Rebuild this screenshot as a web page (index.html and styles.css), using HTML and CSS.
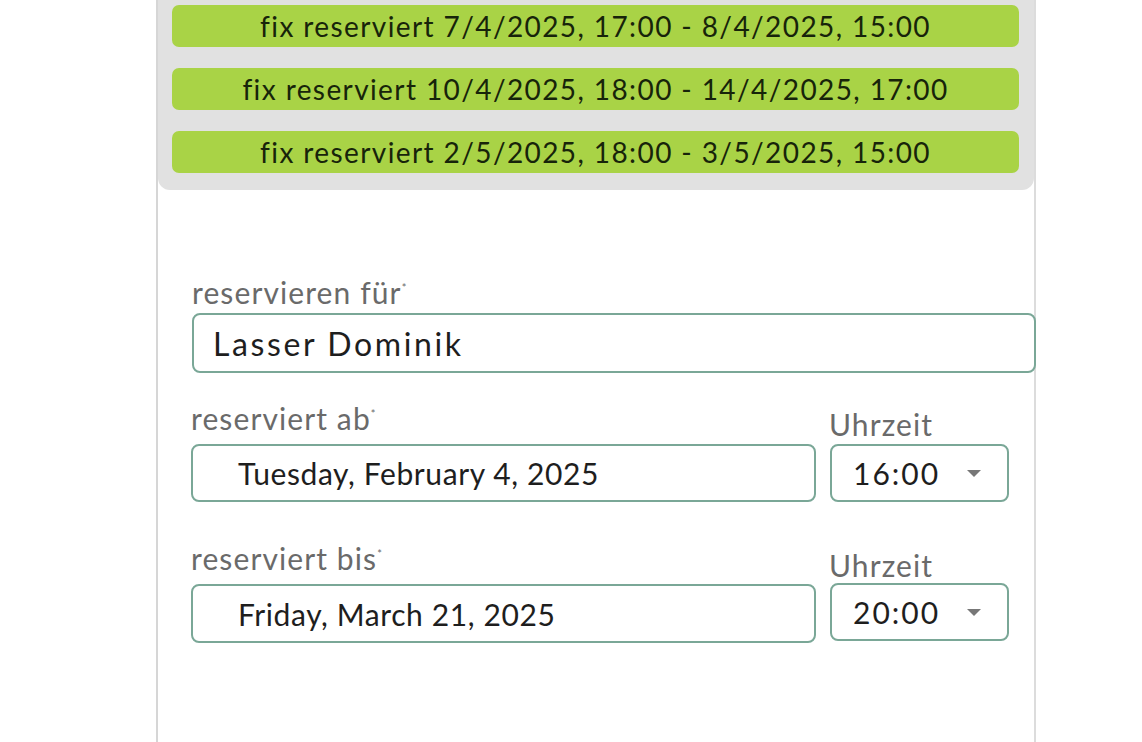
FILE: index.html
```html
<!DOCTYPE html>
<html lang="de">
<head>
<meta charset="utf-8">
<title>Reservierung</title>
<link rel="stylesheet" href="styles.css">
</head>
<body>
<div class="panel">
  <div class="booked">
    <div class="slot">fix reserviert 7/4/2025, 17:00 - 8/4/2025, 15:00</div>
    <div class="slot">fix reserviert 10/4/2025, 18:00 - 14/4/2025, 17:00</div>
    <div class="slot">fix reserviert 2/5/2025, 18:00 - 3/5/2025, 15:00</div>
  </div>
  <form class="form">
    <div class="field full">
      <label class="label">reservieren für<sup>*</sup></label>
      <div class="input name">Lasser Dominik</div>
    </div>
    <div class="row">
      <div class="field date">
        <label class="label">reserviert ab<sup>*</sup></label>
        <div class="input dateinput">Tuesday, February 4, 2025</div>
      </div>
      <div class="field time">
        <label class="label">Uhrzeit</label>
        <div class="input select"><span>16:00</span><span class="caret"></span></div>
      </div>
    </div>
    <div class="row second">
      <div class="field date">
        <label class="label">reserviert bis<sup>*</sup></label>
        <div class="input dateinput">Friday, March 21, 2025</div>
      </div>
      <div class="field time">
        <label class="label">Uhrzeit</label>
        <div class="input select"><span>20:00</span><span class="caret"></span></div>
      </div>
    </div>
  </form>
</div>
</body>
</html>
```

FILE: styles.css
```css
* { box-sizing: border-box; }
html, body {
  margin: 0;
  padding: 0;
  background: #ffffff;
  font-family: Lato, "Open Sans", sans-serif;
  overflow: hidden;
}
.panel {
  margin-left: 156px;
  width: 880px;
  height: 742px;
  border-left: 2px solid #d6d6d6;
  border-right: 2px solid #dcdcdc;
  background: #ffffff;
}
.booked {
  background: #e1e1e1;
  border-radius: 0 0 12px 12px;
  padding: 5px 15px 17px 14px;
  display: flex;
  flex-direction: column;
  gap: 21px;
}
.slot {
  height: 42px;
  background: #a9d346;
  border-radius: 7px;
  color: #17240a;
  font-size: 28px;
  line-height: 42px;
  text-align: center;
  letter-spacing: 1.4px;
  white-space: nowrap;
}
.form {
  padding: 87px 0 0 34px;
  width: 880px;
}
.label {
  display: block;
  color: #6a6a6a;
  font-size: 30px;
  line-height: 31px;
  letter-spacing: 1.1px;
}
.label sup {
  font-size: 11px;
  vertical-align: top;
  line-height: 12px;
  margin-left: 0;
  position: relative;
  top: 5px;
}
.input {
  border: 2px solid #7aa797;
  border-radius: 8px;
  background: #fff;
  color: #1e1e1e;
  display: flex;
  align-items: center;
  white-space: nowrap;
}
.full .label { margin-bottom: 5px; }
.name {
  width: 844px;
  height: 60px;
  padding-left: 19px;
  font-size: 32px;
  letter-spacing: 2.6px;
}
.row {
  display: flex;
  align-items: flex-end;
  gap: 14px;
  margin-top: 30px;
  margin-left: -1px;
}
.row.second { margin-top: 41px; }
.date { width: 625px; }
.date .label { margin-bottom: 10px; }
.time { width: 179px; }
.time .label { margin-bottom: 4px; margin-left: -1px; }
.dateinput {
  height: 58px;
  padding-left: 45px;
  font-size: 30px;
  letter-spacing: 0.6px;
}
.second .dateinput { height: 59px; }
.second .select { margin-bottom: 2px; }
.second .time .label { margin-bottom: 2px; }
.select {
  height: 58px;
  padding: 0 26px 0 21px;
  justify-content: space-between;
  font-size: 30px;
  letter-spacing: 2px;
}
.caret {
  width: 0;
  height: 0;
  border-left: 7px solid transparent;
  border-right: 7px solid transparent;
  border-top: 7px solid #777;
}
```
